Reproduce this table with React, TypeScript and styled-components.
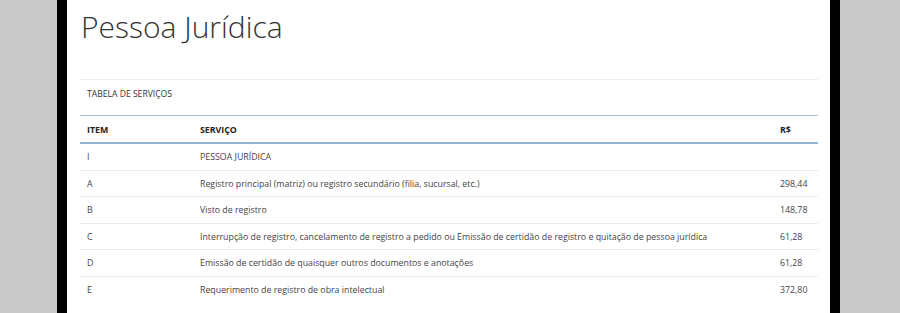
import styled, { createGlobalStyle } from "styled-components";

const GlobalStyle = createGlobalStyle`
  html, body {
    margin: 0;
    padding: 0;
    background: #c9c9c9;
  }
  body {
    font-family: "Open Sans", "Noto Sans", sans-serif;
  }
`;

const Page = styled.div`
  height: 313px;
  overflow: hidden;
  padding-left: 57px;
`;

const Frame = styled.div`
  width: 738px;
  height: 313px;
  background: #fff;
  border-left: 10px solid #000;
  border-right: 10px solid #000;
  padding: 0 12px 0 13px;
  box-sizing: content-box;
`;

const Title = styled.h1`
  margin: 0;
  padding: 7px 0 0 1px;
  font-size: 30px;
  font-weight: 300;
  line-height: 40px;
  color: #333;
`;

const Panel = styled.div`
  margin-top: 32px;
  border-top: 1px solid #eee;
`;

const PanelHeading = styled.div`
  padding: 8px 7px 15px;
  font-size: 8.6px;
  line-height: 12px;
  color: #333;
  text-transform: uppercase;
`;

const Table = styled.table`
  width: 100%;
  table-layout: fixed;
  border-collapse: collapse;
  border-top: 1px solid #a3bedb;
  font-size: 8.8px;
  color: #444;
`;

const HeadCell = styled.th<{ $w?: string }>`
  text-align: left;
  font-weight: 700;
  color: #222;
  padding: 7px 7px 6px;
  height: 13px;
  border-bottom: 2px solid #92b2d4;
  width: ${(p) => p.$w || "auto"};
`;

const Cell = styled.td`
  padding: 7px 7px 6.6px;
  height: 12px;
  line-height: 12px;
  border-top: 1px solid #ececec;
  white-space: nowrap;
`;

const rows = [
  { item: "I", servico: "PESSOA JURÍDICA", valor: "" },
  { item: "A", servico: "Registro principal (matriz) ou registro secundário (filia, sucursal, etc.)", valor: "298,44" },
  { item: "B", servico: "Visto de registro", valor: "148,78" },
  {
    item: "C",
    servico:
      "Interrupção de registro, cancelamento de registro a pedido ou Emissão de certidão de registro e quitação de pessoa jurídica",
    valor: "61,28",
  },
  { item: "D", servico: "Emissão de certidão de quaisquer outros documentos e anotações", valor: "61,28" },
  { item: "E", servico: "Requerimento de registro de obra intelectual", valor: "372,80" },
];

const App = () => {
  return (
    <Page>
      <GlobalStyle />
      <Frame>
        <Title>Pessoa Jurídica</Title>
        <Panel>
          <PanelHeading>Tabela de Serviços</PanelHeading>
          <Table>
            <thead>
              <tr>
                <HeadCell $w="99px">ITEM</HeadCell>
                <HeadCell>SERVIÇO</HeadCell>
                <HeadCell $w="31px">R$</HeadCell>
              </tr>
            </thead>
            <tbody>
              {rows.map((r) => (
                <tr key={r.item}>
                  <Cell>{r.item}</Cell>
                  <Cell>{r.servico}</Cell>
                  <Cell>{r.valor}</Cell>
                </tr>
              ))}
            </tbody>
          </Table>
        </Panel>
      </Frame>
    </Page>
  );
};

export default App;
